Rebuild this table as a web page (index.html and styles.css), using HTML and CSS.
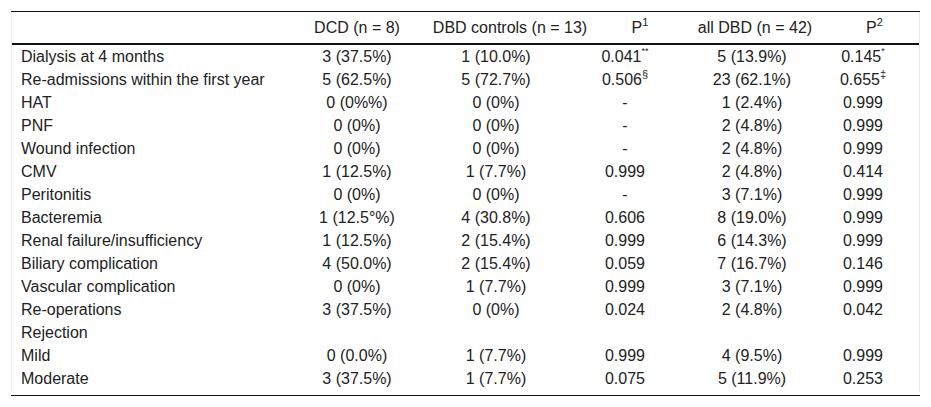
FILE: index.html
```html
<!DOCTYPE html>
<html>
<head>
<meta charset="utf-8">
<link rel="stylesheet" href="styles.css">
</head>
<body>
<div class="page">
  <div class="rule"></div>
  <div class="box">
    <table class="data">
      <colgroup>
        <col class="c-label"><col class="c-dcd"><col class="c-dbd"><col class="c-p1"><col class="c-all"><col class="c-p2">
      </colgroup>
      <thead>
        <tr>
          <th></th>
          <th>DCD (n = 8)</th>
          <th>DBD controls (n = 13)</th>
          <th>P<sup>1</sup></th>
          <th>all DBD (n = 42)</th>
          <th>P<sup>2</sup></th>
        </tr>
      </thead>
      <tbody>
        <tr><td>Dialysis at 4 months</td><td>3 (37.5%)</td><td>1 (10.0%)</td><td>0.041<sup class="ast">**</sup></td><td>5 (13.9%)</td><td>0.145<sup class="ast">*</sup></td></tr>
        <tr><td>Re-admissions within the first year</td><td>5 (62.5%)</td><td>5 (72.7%)</td><td>0.506<sup>§</sup></td><td>23 (62.1%)</td><td>0.655<sup>‡</sup></td></tr>
        <tr><td>HAT</td><td>0 (0%%)</td><td>0 (0%)</td><td>-</td><td>1 (2.4%)</td><td>0.999</td></tr>
        <tr><td>PNF</td><td>0 (0%)</td><td>0 (0%)</td><td>-</td><td>2 (4.8%)</td><td>0.999</td></tr>
        <tr><td>Wound infection</td><td>0 (0%)</td><td>0 (0%)</td><td>-</td><td>2 (4.8%)</td><td>0.999</td></tr>
        <tr><td>CMV</td><td>1 (12.5%)</td><td>1 (7.7%)</td><td>0.999</td><td>2 (4.8%)</td><td>0.414</td></tr>
        <tr><td>Peritonitis</td><td>0 (0%)</td><td>0 (0%)</td><td>-</td><td>3 (7.1%)</td><td>0.999</td></tr>
        <tr><td>Bacteremia</td><td>1 (12.5°%)</td><td>4 (30.8%)</td><td>0.606</td><td>8 (19.0%)</td><td>0.999</td></tr>
        <tr><td>Renal failure/insufficiency</td><td>1 (12.5%)</td><td>2 (15.4%)</td><td>0.999</td><td>6 (14.3%)</td><td>0.999</td></tr>
        <tr><td>Biliary complication</td><td>4 (50.0%)</td><td>2 (15.4%)</td><td>0.059</td><td>7 (16.7%)</td><td>0.146</td></tr>
        <tr><td>Vascular complication</td><td>0 (0%)</td><td>1 (7.7%)</td><td>0.999</td><td>3 (7.1%)</td><td>0.999</td></tr>
        <tr><td>Re-operations</td><td>3 (37.5%)</td><td>0 (0%)</td><td>0.024</td><td>2 (4.8%)</td><td>0.042</td></tr>
        <tr><td>Rejection</td><td></td><td></td><td></td><td></td><td></td></tr>
        <tr><td>Mild</td><td>0 (0.0%)</td><td>1 (7.7%)</td><td>0.999</td><td>4 (9.5%)</td><td>0.999</td></tr>
        <tr><td>Moderate</td><td>3 (37.5%)</td><td>1 (7.7%)</td><td>0.075</td><td>5 (11.9%)</td><td>0.253</td></tr>
      </tbody>
    </table>
  </div>
  <div class="rule rule-bottom"></div>
</div>
</body>
</html>
```

FILE: styles.css
```css
html, body {
  margin: 0;
  padding: 0;
  background: #ffffff;
}

.page {
  padding: 11px 11px 0 11px;
  font-family: "Liberation Sans", Arial, sans-serif;
  font-size: 16px;
  color: #222222;
}

.rule {
  height: 1px;
  background: #111111;
}

.rule-bottom {
  margin-top: 3px;
}

.box {
  border-left: 1px solid #e8e8e8;
  border-right: 1px solid #e8e8e8;
  padding-bottom: 2px;
}

.data {
  width: 100%;
  border-collapse: collapse;
  table-layout: fixed;
}

.c-label { width: 272px; }
.c-dcd { width: 146px; }
.c-dbd { width: 160px; }
.c-p1 { width: 100px; }
.c-all { width: 130px; }
.c-p2 { width: 99px; }

.data th {
  height: 31px;
  padding: 0;
  font-weight: normal;
  text-align: center;
  border-bottom: 2px solid #111111;
  white-space: nowrap;
}

.data th:nth-child(6) {
  padding-left: 10px;
}

.data td {
  height: 23px;
  padding: 0;
  text-align: center;
  white-space: nowrap;
  line-height: 18px;
}

.data td:first-child {
  text-align: left;
  padding-left: 9px;
}

.data td:nth-child(3) {
  padding-right: 28px;
}

.data td:nth-child(4) {
  padding-right: 30px;
}

.data td:nth-child(5) {
  padding-right: 6px;
}

.data td:nth-child(6) {
  padding-right: 13px;
}

.data sup {
  font-size: 11px;
  line-height: 0;
  vertical-align: 7px;
}

.data sup.ast {
  font-size: 9px;
  vertical-align: 8px;
}
```
